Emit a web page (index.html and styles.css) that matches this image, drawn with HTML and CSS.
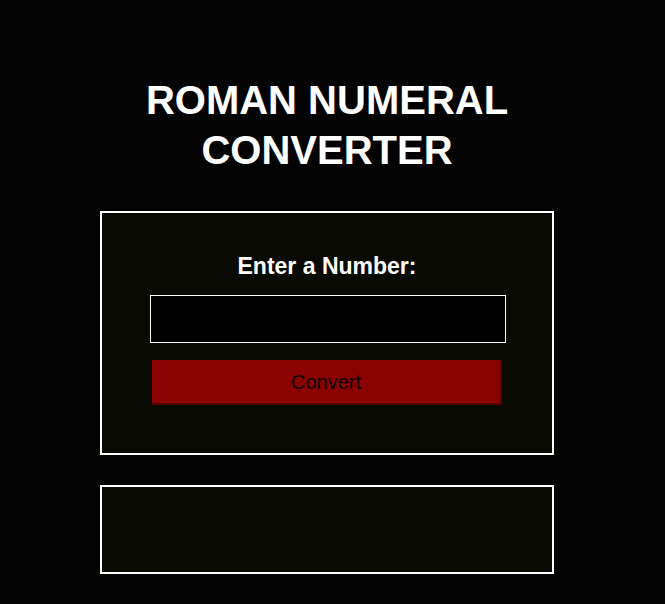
FILE: index.html
```html
<!DOCTYPE html>
<html lang="en">
<head>
<meta charset="utf-8">
<title>Roman Numeral Converter</title>
<link rel="stylesheet" href="styles.css">
</head>
<body>
<main class="page">
  <h1 class="title">ROMAN NUMERAL<br>CONVERTER</h1>
  <form class="card" onsubmit="return false;">
    <label class="label" for="number">Enter a Number:</label>
    <input class="number-input" id="number" type="number">
    <button class="convert-btn" type="button">Convert</button>
  </form>
  <div class="output"></div>
</main>
</body>
</html>
```

FILE: styles.css
```css
html, body {
  margin: 0;
  padding: 0;
  background: #030304;
}

body {
  font-family: "Liberation Sans", Arial, sans-serif;
  color: #ffffff;
  height: 604px;
  overflow: hidden;
}

.page {
  width: 654px;
  display: flex;
  flex-direction: column;
  align-items: center;
  padding-top: 75px;
}

.title {
  margin: 0;
  font-size: 40px;
  font-weight: 700;
  line-height: 50px;
  text-align: center;
}

.card {
  margin: 36px 0 0;
  box-sizing: border-box;
  width: 454px;
  height: 244px;
  border: 2px solid #ffffff;
  background: #0a0a05;
  display: flex;
  flex-direction: column;
  align-items: center;
  padding: 40px 0 0;
}

.label {
  font-size: 23px;
  font-weight: 700;
  line-height: 26px;
  margin-bottom: 16px;
}

.number-input {
  box-sizing: border-box;
  width: 356px;
  height: 48px;
  margin: 0 0 17px 1px;
  border: 1px solid #ffffff;
  background: #000000;
  color: #ffffff;
  font-family: inherit;
  font-size: 20px;
  padding: 0 10px;
  outline: none;
}

.convert-btn {
  box-sizing: border-box;
  width: 350px;
  height: 45px;
  margin: 0;
  padding: 1px 0 0;
  border-style: solid;
  border-width: 0 2px 2px 0;
  border-color: #8b0000 #570000 #570000 #8b0000;
  background: #8b0000;
  color: #0d0000;
  font-family: "Liberation Sans", Arial, sans-serif;
  font-size: 20px;
  cursor: pointer;
}

.output {
  margin-top: 30px;
  box-sizing: border-box;
  width: 454px;
  height: 89px;
  border: 2px solid #ffffff;
  background: #0a0a05;
}
```
